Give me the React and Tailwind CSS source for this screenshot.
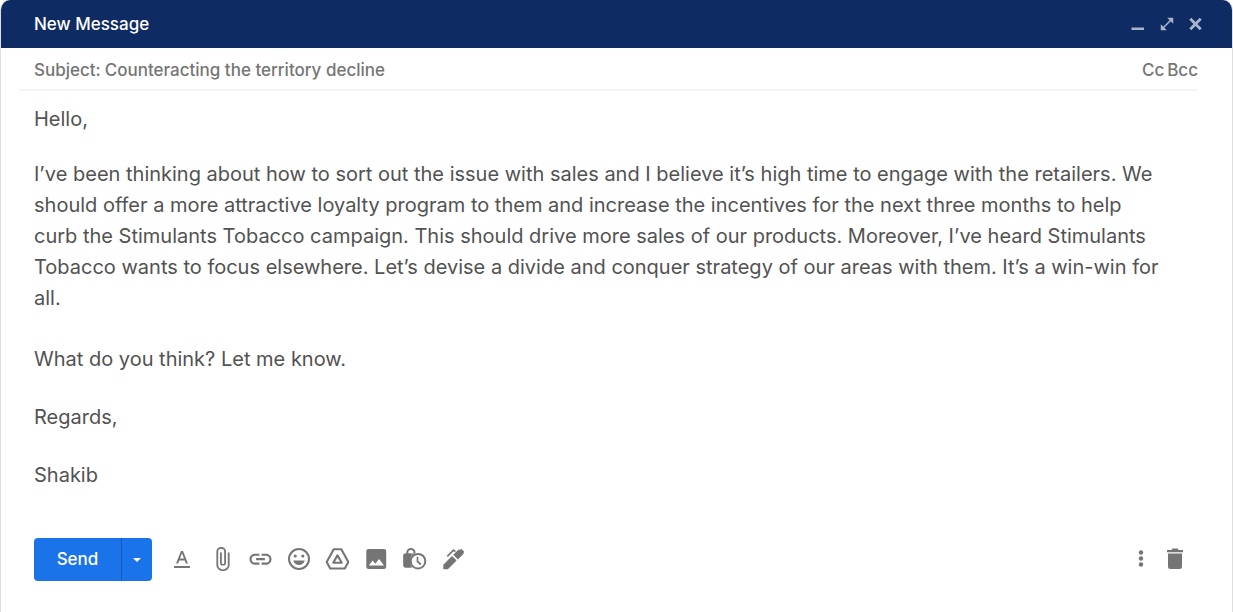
import { useState } from "react";

function Icon({ children, className = "size-6" }) {
  return (
    <svg viewBox="0 0 24 24" fill="currentColor" aria-hidden="true" className={className}>
      {children}
    </svg>
  );
}

const tools = [
  {
    label: "Formatting options",
    art: (
      <>
        <path d="M4 19h16v2H4z" />
        <path fillRule="evenodd" d="M11 4h2l5 12.500h-2.100l-1.200-3.100H9.300l-1.200 3.100H6zM10 11.600h4L12 6.300z" />
      </>
    ),
  },
  {
    label: "Attach files",
    art: (
      <path
        transform="translate(-1 -1) scale(1.2 1.09)"
        d="M16.500 6v11.500c0 2.210-1.790 4-4 4s-4-1.790-4-4V5a2.500 2.500 0 0 1 5 0v10.500c0 .55-.45 1-1 1s-1-.45-1-1V6H10v9.500a2.500 2.500 0 0 0 5 0V5c0-2.210-1.790-4-4-4S7 2.790 7 5v12.500c0 3.040 2.460 5.500 5.500 5.500s5.500-2.460 5.500-5.500V6h-1.500z"
      />
    ),
  },
  {
    label: "Insert link",
    art: (
      <path
        transform="translate(-.7 -1) scale(1.1)"
        d="M3.900 12c0-1.710 1.390-3.100 3.100-3.100h4V7H7c-2.760 0-5 2.240-5 5s2.240 5 5 5h4v-1.900H7c-1.710 0-3.100-1.390-3.100-3.100zM8 13h8v-2H8v2zm9-6h-4v1.900h4c1.710 0 3.100 1.390 3.100 3.100s-1.390 3.100-3.100 3.100h-4V17h4c2.760 0 5-2.240 5-5s-2.240-5-5-5z"
      />
    ),
  },
  {
    label: "Insert emoji",
    art: (
      <>
        <circle cx="12" cy="12" r="10" fill="none" stroke="currentColor" strokeWidth="2" />
        <circle cx="8.200" cy="9" r="1.600" />
        <circle cx="15.800" cy="9" r="1.600" />
        <path d="M6.200 13.500h11.600c-.9 2.800-3 4.500-5.800 4.500s-4.900-1.700-5.800-4.500z" />
      </>
    ),
  },
  {
    label: "Insert files using Drive",
    art: (
      <g fill="none" stroke="currentColor" strokeWidth="2.100" strokeLinejoin="round">
        <path d="M8.700 2.300h7.600l7 12.700-3.500 6.500H5.200L1.700 15z" />
        <path d="M12.500 8.300l4.200 7.500H8.300z" />
      </g>
    ),
  },
  {
    label: "Insert photo",
    art: (
      <path
        fillRule="evenodd"
        d="M4.500 2h15.500a2.200 2.200 0 0 1 2.200 2.200v15.600a2.200 2.200 0 0 1-2.200 2.200H4.500a2.200 2.200 0 0 1-2.200-2.200V4.200A2.200 2.200 0 0 1 4.500 2zM4.800 18.500h15.200l-4.900-6.600-3.800 4.900-2.700-3.200z"
      />
    ),
  },
  {
    label: "Toggle confidential mode",
    art: (
      <>
        <path d="M4.300 8V5.500a3.600 3.600 0 0 1 7.200 0V8" fill="none" stroke="currentColor" strokeWidth="2" />
        <path d="M2.400 6.500H13.600a2 2 0 0 1 2 2V20.500H2.400a2 2 0 0 1-2-2V8.500a2 2 0 0 1 2-2z" />
        <circle cx="15" cy="14.200" r="8.400" fill="#fff" />
        <path d="M2.400 6.500H7.500v14H2.400a2 2 0 0 1-2-2V8.500a2 2 0 0 1 2-2z" />
        <circle cx="15" cy="14.200" r="7.300" fill="#fff" stroke="currentColor" strokeWidth="2" />
        <path d="M14.500 9.800v4.700l3.300 3" fill="none" stroke="currentColor" strokeWidth="1.700" />
      </>
    ),
  },
  {
    label: "Insert signature",
    art: (
      <>
        <path d="M1.300 22.300v-4.600l8.700-8.700 4.600 4.600-8.700 8.700z" />
        <path d="M11.300 7.800l5.200-5.200 1.300.4 1.400-1.200 2.800 2.800-.6 2.400-5.500 5.400z" />
        <path d="M5.300 9.300l6.200-6.200 1.900 1.500" fill="none" stroke="currentColor" strokeWidth="1.700" />
      </>
    ),
  },
];

export default function App() {
  const [subject, setSubject] = useState("Counteracting the territory decline");

  return (
    <main className="flex min-h-screen flex-col overflow-hidden rounded-t-[10px] border-x border-[#dedede] bg-white font-['Inter',sans-serif] text-[#757575]">
      <header className="flex h-12 items-center justify-between bg-[#0f2b63] pr-7 pl-[33px]">
        <h1 className="pt-0.5 text-[17px] font-medium text-white">New Message</h1>
        <div className="flex gap-[13px] text-[#a9b3ca]">
          <button type="button" aria-label="Minimize">
            <svg viewBox="0 0 16 16" className="size-4" aria-hidden="true">
              <path d="M1.500 11.500h12.500V14H1.500z" fill="currentColor" />
            </svg>
          </button>
          <button type="button" aria-label="Full screen">
            <svg viewBox="0 0 16 16" className="size-4" aria-hidden="true">
              <path d="M8.200 1.800h6v6zM1.800 8.200v6h6z" fill="currentColor" />
              <path d="M4 12l8-8" stroke="currentColor" strokeWidth="1.600" />
            </svg>
          </button>
          <button type="button" aria-label="Close">
            <svg viewBox="0 0 16 16" className="size-4" aria-hidden="true">
              <path d="M2.300 2.800l10.400 10.400M12.700 2.800L2.300 13.200" stroke="currentColor" strokeWidth="2.900" />
            </svg>
          </button>
        </div>
      </header>

      <div className="mr-[34px] ml-[18px] flex h-[43px] items-center border-b-2 border-[#f4f4f4] pt-1 pl-[15px] text-[17px] font-medium">
        <label htmlFor="subject" className="mr-1">Subject:</label>
        <input
          id="subject"
          value={subject}
          onChange={(event) => setSubject(event.target.value)}
          className="min-w-0 flex-1 bg-transparent outline-none"
        />
        <div className="flex gap-[3px]">
          <button type="button">Cc</button>
          <button type="button">Bcc</button>
        </div>
      </div>

      <div
        role="textbox"
        aria-multiline="true"
        aria-label="Message body"
        contentEditable
        suppressContentEditableWarning
        className="pt-[13px] pr-16 pl-[33px] text-xl leading-[31px] text-[#525252] outline-none"
      >
        <p>Hello,</p>
        <p className="mt-6">
          I’ve been thinking about how to sort out the issue with sales and I believe it’s high time to engage with the
          retailers. We should offer a more attractive loyalty program to them and increase the incentives for the next
          three months to help curb the Stimulants Tobacco campaign. This should drive more sales of our products.
          Moreover, I’ve heard Stimulants Tobacco wants to focus elsewhere. Let’s devise a divide and conquer strategy of
          our areas with them. It’s a win-win for all.
        </p>
        <p className="mt-[30px]">What do you think? Let me know.</p>
        <p className="mt-[27px]">Regards,</p>
        <p className="mt-[27px]">Shakib</p>
      </div>

      <footer className="mt-auto flex items-center pr-[45px] pb-[31px] pl-[33px]">
        <div className="flex h-[43px] overflow-hidden rounded bg-[#1a73e8] text-white">
          <button type="button" className="w-[87px] text-[17px] font-medium">Send</button>
          <button
            type="button"
            aria-label="More send options"
            className="flex w-[31px] items-center justify-center border-l border-[#185abc]"
          >
            <svg viewBox="0 0 8 4" className="h-1 w-2" fill="currentColor" aria-hidden="true">
              <path d="M0 0h8L4 4z" />
            </svg>
          </button>
        </div>
        <div className="ml-[18px] flex w-[296px] justify-between pb-0.5">
          {tools.map((tool) => (
            <button key={tool.label} type="button" aria-label={tool.label}>
              <Icon>{tool.art}</Icon>
            </button>
          ))}
        </div>
        <div className="ml-auto flex gap-[10px] pb-0.5">
          <button type="button" aria-label="More options">
            <Icon>
              <circle cx="12" cy="5.500" r="2.200" />
              <circle cx="12" cy="11.500" r="2.200" />
              <circle cx="12" cy="17.500" r="2.200" />
            </Icon>
          </button>
          <button type="button" aria-label="Discard draft">
            <Icon>
              <path d="M4 3h4.300l1.200-1.400h5L15.700 3H20v2.300H4zM5 6.500h14V19.500a2.500 2.500 0 0 1-2.500 2.500h-9A2.500 2.500 0 0 1 5 19.500z" />
            </Icon>
          </button>
        </div>
      </footer>
    </main>
  );
}
